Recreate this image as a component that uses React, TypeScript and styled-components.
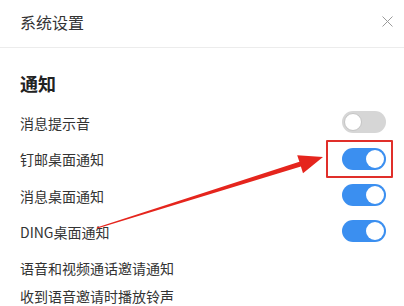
import React from "react";
import styled, { createGlobalStyle } from "styled-components";

const Global = createGlobalStyle`
  html, body { margin: 0; padding: 0; background: #fff; }
  body { font-family: "Noto Sans CJK SC", "Noto Sans", sans-serif; color: #333; }
`;

const Page = styled.div`
  position: relative;
  width: 404px;
  height: 306px;
  overflow: hidden;
  background: #fff;
`;

const Header = styled.header`
  height: 48px;
  box-sizing: border-box;
  border-bottom: 1px solid #ececec;
  display: flex;
  align-items: center;
  justify-content: space-between;
  padding: 0 10px 4px 20px;
`;

const Title = styled.h1`
  margin: 0;
  font-size: 16px;
  font-weight: 400;
  line-height: 22px;
  color: #333;
`;

const CloseButton = styled.button`
  width: 14px;
  height: 14px;
  padding: 0;
  border: 0;
  background: none;
  display: flex;
  align-items: center;
  justify-content: center;
`;

const Section = styled.section`
  padding: 23px 18px 0 20px;
`;

const SectionTitle = styled.h2`
  margin: 0 0 9px;
  font-size: 18px;
  font-weight: 700;
  line-height: 24px;
  color: #222;
`;

const Row = styled.div<{ $h: number }>`
  height: ${(p) => p.$h}px;
  display: flex;
  align-items: center;
  justify-content: space-between;
`;

const Label = styled.span`
  font-size: 14px;
  line-height: 20px;
  color: #333;
  padding-top: 1px;
`;

const Toggle = styled.span<{ $on: boolean; $mark?: boolean }>`
  position: relative;
  width: 44px;
  height: 22px;
  border-radius: 11px;
  background: ${(p) => (p.$on ? "#3b8ff0" : "#d6d6d6")};
  flex: none;

  &::before {
    content: "";
    position: absolute;
    top: 2px;
    left: ${(p) => (p.$on ? "24px" : "2px")};
    width: 18px;
    height: 18px;
    box-sizing: border-box;
    border-radius: 50%;
    background: #fff;
    border: ${(p) => (p.$on ? "none" : "1px solid #c4c4c4")};
  }

  &::after {
    content: "";
    display: ${(p) => (p.$mark ? "block" : "none")};
    position: absolute;
    left: -16px;
    right: -7px;
    top: -8px;
    bottom: -8px;
    border: 2px solid #e02f2a;
    border-radius: 1px;
  }
`;

const Arrow = styled.svg`
  position: absolute;
  left: 0;
  top: 0;
  pointer-events: none;
`;

const rows: { label: string; toggle?: boolean; mark?: boolean; h: number }[] = [
  { label: "消息提示音", toggle: false, h: 36 },
  { label: "钉邮桌面通知", toggle: true, mark: true, h: 37 },
  { label: "消息桌面通知", toggle: true, h: 36 },
  { label: "DING桌面通知", toggle: true, h: 36 },
  { label: "语音和视频通话邀请通知", h: 36 },
  { label: "收到语音邀请时播放铃声", h: 20 },
];

export default function App() {
  return (
    <Page>
      <Global />
      <Header>
        <Title>系统设置</Title>
        <CloseButton aria-label="关闭">
          <svg width="11" height="11" viewBox="0 0 11 11">
            <path d="M0.5 0.5 L10.5 10.5 M10.5 0.5 L0.5 10.5" stroke="#9a9a9a" strokeWidth="1" fill="none" />
          </svg>
        </CloseButton>
      </Header>
      <Section>
        <SectionTitle>通知</SectionTitle>
        {rows.map((r) => (
          <Row key={r.label} $h={r.h}>
            <Label>{r.label}</Label>
            {r.toggle !== undefined && <Toggle $on={r.toggle} $mark={r.mark} />}
          </Row>
        ))}
      </Section>
      <Arrow width="404" height="306" viewBox="0 0 404 306">
        <polygon
          points="96.8,227.4 299.4,161.8 297.2,155.2 323,157 303,173.2 300.9,166.6 97.2,228.6"
          fill="#e5251d"
        />
      </Arrow>
    </Page>
  );
}
